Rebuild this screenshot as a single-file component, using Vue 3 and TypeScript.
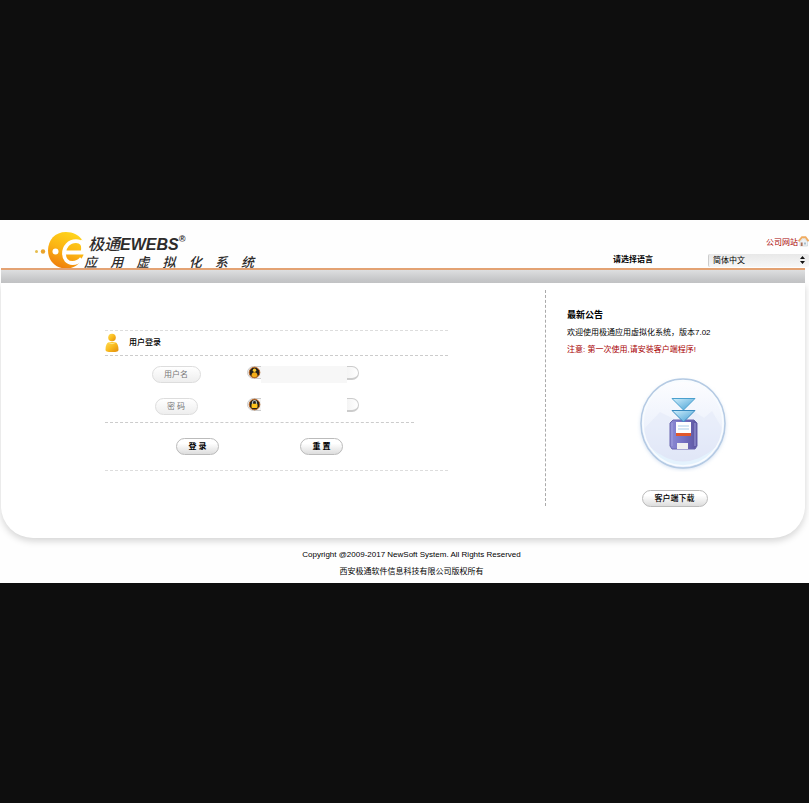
<script setup lang="ts">
import { ref } from 'vue'

const language = ref('zh')
const username = ref('')
const password = ref('')
const tagline: string[] = ['应', '用', '虚', '拟', '化', '系', '统']

function reset(): void {
  username.value = ''
  password.value = ''
}
</script>

<template>
  <div class="backdrop">
    <div class="page">
      <header class="header">
        <div class="brand">
          <svg class="brand-mark" viewBox="0 0 52 36" aria-hidden="true">
            <defs>
              <linearGradient id="sun" x1="0.7" y1="0" x2="0.3" y2="1">
                <stop offset="0" stop-color="#ffd51c" />
                <stop offset="0.5" stop-color="#fbb414" />
                <stop offset="1" stop-color="#ee7c0c" />
              </linearGradient>
            </defs>
            <circle cx="2.5" cy="19.5" r="1.5" fill="#e6bd4c" />
            <circle cx="9" cy="19.5" r="2.2" fill="#e9a32b" />
            <path d="M49 9C45 3 39 0 32 0 21 0 14 8 14 18.500S22 36.500 32 36.500c6 0 11-2 14-7l3.500-6.500z" fill="url(#sun)" />
            <path d="M31.500 20.500H48.500C50.500 12 47 9.200 42 9.200c-7 0-12 5.500-12 12.300 0 6 3.500 9.500 8.500 9.500 4 0 7-2 9-4.500" fill="none" stroke="#fff" stroke-width="3.800" />
            <path d="M47 7.500C53 9 52 17 50.500 22L48 20z" fill="#fff" />
            <circle cx="21.500" cy="19.500" r="3" fill="#fff" />
          </svg>
          <div class="brand-words">
            <div class="brand-name"><span>极通</span><b>EWEBS</b><sup>®</sup></div>
            <div class="brand-tagline">
              <span v-for="word in tagline" :key="word">{{ word }}</span>
            </div>
          </div>
        </div>
        <div class="tools">
          <a class="site-link" href="#">公司网站
            <svg viewBox="0 0 11 11" aria-hidden="true">
              <path d="M2 5.5 5.5 2 9.5 5.5V10H2z" fill="#eef1f3" stroke="#c5cdd2" stroke-width=".6" />
              <path d="M.5 5.3 4 1.2h3.5l3 4.1" fill="none" stroke="#efac62" stroke-width="1.9" />
              <path d="M2.8 6.5h1.8V10H2.8z" fill="#ab7058" />
              <path d="M6 6.500h2v2H6z" fill="#a9bfce" />
            </svg>
          </a>
          <div class="language">
            <label for="language">请选择语言</label>
            <div class="select-wrap">
              <select id="language" v-model="language">
                <option value="zh">简体中文</option>
              </select>
              <svg viewBox="0 0 5 8" aria-hidden="true"><path d="M0 3 2.500 0 5 3zM0 5h5L2.500 8z" fill="#111" /></svg>
            </div>
          </div>
        </div>
      </header>

      <div class="bar"></div>

      <main class="panel">
        <form class="login" @submit.prevent @reset.prevent="reset">
          <h1 class="login-title">
            <svg viewBox="0 0 14 20" aria-hidden="true">
              <defs>
                <linearGradient id="person" x1="0" y1="0" x2="1" y2="1">
                  <stop offset="0" stop-color="#ffdc55" />
                  <stop offset="0.5" stop-color="#f9bb1e" />
                  <stop offset="1" stop-color="#e18c0c" />
                </linearGradient>
              </defs>
              <path d="M4 9C1.500 10 .5 13 .5 16.500.5 18.500 2 19 7 19s6.500-.5 6.500-2.500C13.500 13 12.500 10 10 9z" fill="url(#person)" />
              <circle cx="7" cy="4.500" r="3.800" fill="url(#person)" />
              <path d="M3.500 9.500Q7 12 10.500 9.500" fill="none" stroke="#fff0a4" stroke-width=".8" />
            </svg>
            用户登录
          </h1>
          <div class="fields">
            <div class="field">
              <div class="label-cell"><label class="tag wide" for="username">用户名</label></div>
              <div class="entry">
                <svg class="entry-icon" viewBox="0 0 14 13" aria-hidden="true">
                  <path d="M14 .5H6.500a6 6 0 0 0 0 12H14" fill="#f4f4f4" stroke="#ccc" />
                  <circle cx="7.500" cy="6.500" r="5.300" fill="#24211e" stroke="#bd631c" />
                  <circle cx="7.500" cy="4.300" r="1.700" fill="#ffcf35" />
                  <path d="M4.500 10.300c0-3 1-4 3-4s3 1 3 4q-3 2-6 0z" fill="#f5ad18" />
                </svg>
                <input id="username" v-model="username" class="filled" type="text" autocomplete="off" />
                <span class="cap"></span>
              </div>
            </div>
            <div class="field">
              <div class="label-cell"><label class="tag" for="password">密 码</label></div>
              <div class="entry">
                <svg class="entry-icon" viewBox="0 0 14 13" aria-hidden="true">
                  <path d="M14 .5H6.500a6 6 0 0 0 0 12H14" fill="#f4f4f4" stroke="#ccc" />
                  <circle cx="7.500" cy="6.500" r="5.300" fill="#24211e" stroke="#bd631c" />
                  <path d="M5.500 6V4.500a2 2 0 0 1 4 0V6" fill="none" stroke="#b9b9b3" stroke-width="1.200" />
                  <rect x="4.500" y="5.700" width="6" height="4.300" rx="1" fill="#ffc21c" />
                </svg>
                <input id="password" v-model="password" type="password" autocomplete="off" />
                <span class="cap"></span>
              </div>
            </div>
          </div>
          <div class="actions">
            <button class="pill" type="submit">登 录</button>
            <button class="pill" type="reset">重 置</button>
          </div>
        </form>

        <aside class="news">
          <h2>最新公告</h2>
          <p>欢迎使用极通应用虚拟化系统，版本7.02</p>
          <p class="warning">注意: 第一次使用,请安装客户端程序!</p>
          <div class="download">
            <svg viewBox="0 0 92 96" aria-hidden="true">
              <defs>
                <linearGradient id="disc" x1="0" y1="0" x2="0" y2="1">
                  <stop offset="0" stop-color="#fdfdff" />
                  <stop offset="0.55" stop-color="#edf2fc" />
                  <stop offset="1" stop-color="#dce2f5" />
                </linearGradient>
                <linearGradient id="arrow" x1="0" y1="0" x2="1" y2="1">
                  <stop offset="0" stop-color="#d1effc" />
                  <stop offset="1" stop-color="#429ed3" />
                </linearGradient>
                <linearGradient id="floppy" x1="0" y1="0" x2="1" y2="0">
                  <stop offset="0" stop-color="#8c8bd4" />
                  <stop offset="0.5" stop-color="#7470c3" />
                  <stop offset="1" stop-color="#5c559e" />
                </linearGradient>
                <filter id="soft" x="-20%" y="-20%" width="140%" height="140%"><feGaussianBlur stdDeviation="2" /></filter>
              </defs>
              <ellipse cx="46" cy="49" rx="42" ry="44" fill="#c5d6ed" filter="url(#soft)" />
              <ellipse cx="46" cy="47.500" rx="42" ry="44.500" fill="url(#disc)" stroke="#b4cae3" stroke-width="1.500" />
              <path d="M6 54 23 36l16 8 16-10 12 8 8-7 11 19c-3 20-19 36-40 36S8 76 6 54z" fill="#e1e8f8" opacity=".5" />
              <path d="M13 71Q46 100 79 71C72 85 62 90 46 90S20 85 13 71z" fill="#e4f2fd" />
              <ellipse cx="46" cy="47.500" rx="40" ry="42.500" fill="none" stroke="#f8fcff" stroke-width="1.500" />
              <path d="M36 44h21l3 3v23l-2 3H35l-2-3V47z" fill="url(#floppy)" stroke="#6965ae" />
              <path d="M35 47v23M58 47v23" stroke="#a09fdc" />
              <path d="M39 46h15v11H39z" fill="#fff" />
              <path d="M41 50h11M41 53h11" stroke="#a9cdea" />
              <path d="M39 57h15v3H39z" fill="#e2572b" />
              <path d="M40 67h11v6H40z" fill="#efeff1" />
              <path d="M35 22.500h23L46.500 34z" fill="url(#arrow)" stroke="#4aa0ce" />
              <path d="M35 34.500h23L46.500 46z" fill="url(#arrow)" stroke="#388bc0" />
            </svg>
            <button class="pill large" type="button">客户端下载</button>
          </div>
        </aside>
      </main>

      <footer class="footer">
        <p>Copyright @2009-2017 NewSoft System. All Rights Reserved</p>
        <p>西安极通软件信息科技有限公司版权所有</p>
      </footer>
    </div>
  </div>
</template>

<style>
body {
  margin: 0;
  background: #0e0e0e;
}
</style>

<style scoped>
* {
  box-sizing: border-box;
}

.backdrop {
  min-height: 100vh;
  display: flex;
  align-items: center;
  background: #0e0e0e;
  color: #000;
  font: 8px/16px "Liberation Sans", "Noto Sans CJK SC", sans-serif;
}

.page {
  width: 100%;
  background: #fefefe;
  overflow: hidden;
}

p,
h1,
h2 {
  margin: 0;
}

input,
select,
button {
  font: inherit;
  color: inherit;
}

.header {
  height: 48px;
  display: flex;
  justify-content: space-between;
}

.brand {
  display: flex;
  padding: 12px 0 0 34px;
  color: #2e2c2b;
}

.brand-mark {
  width: 52px;
  height: 36px;
}

.brand-words {
  display: flex;
  flex-direction: column;
  width: 170px;
  margin-left: -2px;
  padding-top: 4px;
  font-style: italic;
}

.brand-name {
  display: flex;
  align-items: center;
  padding-left: 4px;
  font-size: 16px;
  line-height: 18px;
}

.brand-name span {
  font-weight: 500;
}

.brand-name sup {
  align-self: flex-start;
  font-size: 9px;
  line-height: 6px;
  font-weight: 700;
}

.brand-tagline {
  display: flex;
  justify-content: space-between;
  font-size: 13px;
  line-height: 17px;
  font-weight: 500;
}

.tools {
  display: flex;
  flex-direction: column;
  align-items: flex-end;
  padding-top: 15px;
}

.site-link {
  display: flex;
  align-items: center;
  color: #a80000;
  text-decoration: none;
}

.site-link svg {
  width: 11px;
  height: 11px;
  margin-top: -4px;
}

.language {
  display: flex;
  align-items: center;
  gap: 55px;
  padding-top: 1px;
  font-weight: 700;
}

.select-wrap {
  display: grid;
  align-items: center;
  width: 101px;
  font-weight: 400;
}

.select-wrap select,
.select-wrap svg {
  grid-area: 1 / 1;
}

.select-wrap select {
  appearance: none;
  height: 13px;
  padding: 0 4px;
  border: 0;
  border-left: 1px solid #ccc;
  border-radius: 2px;
  background: linear-gradient(#e8e8e8, #f7f7f7);
  line-height: 13px;
}

.select-wrap svg {
  justify-self: end;
  width: 5px;
  height: 8px;
  margin-right: 4px;
  pointer-events: none;
}

.bar {
  height: 15px;
  margin: 0 4px 0 1px;
  border-top: 2px solid #e3a273;
  background: linear-gradient(#dedfe0, #bdbec0);
}

.panel {
  display: grid;
  grid-template-columns: 545fr 259fr;
  height: 255px;
  margin: 0 4px 0 1px;
  padding-top: 7px;
  border-radius: 0 0 32px 32px;
  background: #fff;
  box-shadow: 0 3px 7px #d4d4d4;
}

.login {
  width: 343px;
  margin-left: 104px;
  padding-top: 40px;
}

.login-title {
  display: flex;
  align-items: center;
  gap: 10px;
  height: 26px;
  border-top: 1px dashed #ddd;
  border-bottom: 1px dashed #ccc;
  font-size: 8px;
  font-weight: 500;
}

.login-title svg {
  width: 14px;
  height: 20px;
}

.fields {
  display: flex;
  flex-direction: column;
  gap: 15px;
  width: 309px;
  padding: 10px 0 7px;
  border-bottom: 1px dashed #ccc;
}

.field {
  display: flex;
  align-items: center;
}

.label-cell {
  display: flex;
  justify-content: center;
  width: 142px;
}

.tag,
.pill {
  display: block;
  width: 43px;
  height: 17px;
  padding: 0;
  border: 1px solid #ddd;
  border-radius: 9px;
  background: linear-gradient(#fff, #eee);
  color: #777;
  line-height: 15px;
  text-align: center;
}

.tag.wide {
  width: 49px;
}

.entry {
  display: flex;
  height: 17px;
}

.entry-icon {
  width: 14px;
  height: 13px;
}

.entry input {
  width: 86px;
  height: 17px;
  padding: 0 2px;
  border: 0;
  background: transparent;
}

.entry input.filled {
  background: #f7f7f7;
}

.cap {
  width: 12px;
  height: 14px;
  border: 1px solid #ccc;
  border-left: 0;
  border-bottom: 2px solid #ccc;
  border-radius: 0 7px 7px 0;
  background: linear-gradient(90deg, #f4f4f4, #fff);
}

.actions {
  display: flex;
  gap: 81px;
  height: 48px;
  padding: 15px 0 0 71px;
  border-bottom: 1px dashed #ddd;
}

.pill {
  border-color: #bbb;
  background: linear-gradient(#fff 30%, #ddd);
  color: #000;
  font-weight: 700;
}

.pill.large {
  width: 66px;
  font-weight: 500;
}

.news {
  height: 216px;
  margin-left: -1px;
  padding: 17px 0 0 21px;
  border-left: 1px dashed #aaa;
}

.news h2 {
  font-size: 9px;
  line-height: 17px;
}

.news p {
  line-height: 17px;
}

.news .warning {
  color: #a80000;
}

.download {
  display: flex;
  flex-direction: column;
  align-items: center;
  width: 215px;
  padding-top: 18px;
}

.download svg {
  width: 92px;
  height: 96px;
  margin: 0 0 18px 17px;
}

.footer {
  padding: 8px 0 3px 14px;
  text-align: center;
  line-height: 17px;
}
</style>
